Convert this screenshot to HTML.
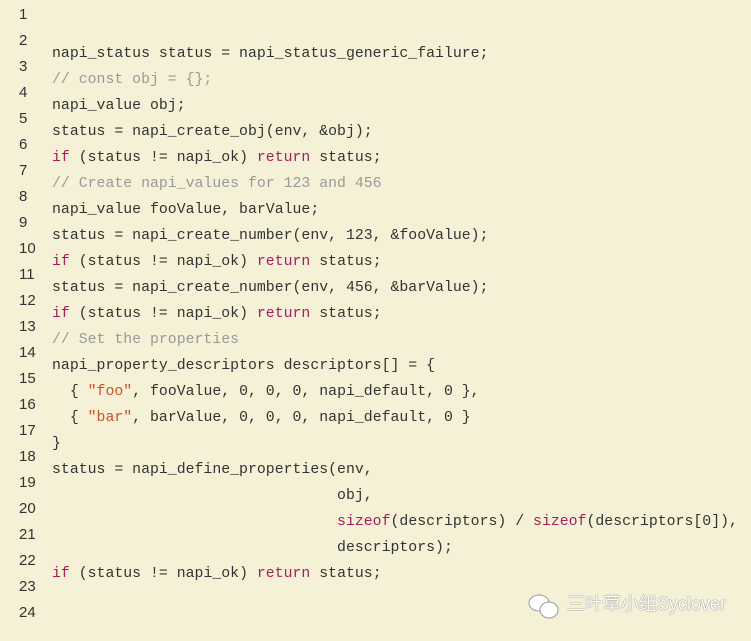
<!DOCTYPE html>
<html><head><meta charset="utf-8"><style>
html,body{margin:0;padding:0;}
body{width:751px;height:641px;background:#f4f1d6;position:relative;overflow:hidden;font-family:"Liberation Mono",monospace;font-size:14.85px;color:#333;}
.n{position:absolute;left:19px;font-family:"Liberation Sans",sans-serif;font-size:15px;color:#333;line-height:20px;}
.c{position:absolute;left:52px;white-space:pre;line-height:20px;}
.k{color:#a71d5d;}
.m{color:#999;}
.s{color:#d0502a;}
.wm{position:absolute;left:567px;top:594px;font-family:"Liberation Sans","Noto Sans CJK SC",sans-serif;font-size:18px;color:#fff;text-shadow:0 0 1px #777,0 0 1px #777;line-height:20px;}
</style></head><body>
<div class="n" style="top:5px">1</div>
<div class="n" style="top:31px">2</div>
<div class="n" style="top:57px">3</div>
<div class="n" style="top:83px">4</div>
<div class="n" style="top:109px">5</div>
<div class="n" style="top:135px">6</div>
<div class="n" style="top:161px">7</div>
<div class="n" style="top:187px">8</div>
<div class="n" style="top:213px">9</div>
<div class="n" style="top:239px">10</div>
<div class="n" style="top:265px">11</div>
<div class="n" style="top:291px">12</div>
<div class="n" style="top:317px">13</div>
<div class="n" style="top:343px">14</div>
<div class="n" style="top:369px">15</div>
<div class="n" style="top:395px">16</div>
<div class="n" style="top:421px">17</div>
<div class="n" style="top:447px">18</div>
<div class="n" style="top:473px">19</div>
<div class="n" style="top:499px">20</div>
<div class="n" style="top:525px">21</div>
<div class="n" style="top:551px">22</div>
<div class="n" style="top:577px">23</div>
<div class="n" style="top:603px">24</div>

<div class="c" style="top:44px">napi_status status = napi_status_generic_failure;</div>
<div class="c m" style="top:70px">// const obj = {};</div>
<div class="c" style="top:96px">napi_value obj;</div>
<div class="c" style="top:122px">status = napi_create_obj(env, &amp;obj);</div>
<div class="c" style="top:148px"><span class="k">if</span> (status != napi_ok) <span class="k">return</span> status;</div>
<div class="c m" style="top:174px">// Create napi_values for 123 and 456</div>
<div class="c" style="top:200px">napi_value fooValue, barValue;</div>
<div class="c" style="top:226px">status = napi_create_number(env, 123, &amp;fooValue);</div>
<div class="c" style="top:252px"><span class="k">if</span> (status != napi_ok) <span class="k">return</span> status;</div>
<div class="c" style="top:278px">status = napi_create_number(env, 456, &amp;barValue);</div>
<div class="c" style="top:304px"><span class="k">if</span> (status != napi_ok) <span class="k">return</span> status;</div>
<div class="c m" style="top:330px">// Set the properties</div>
<div class="c" style="top:356px">napi_property_descriptors descriptors[] = {</div>
<div class="c" style="top:382px">  { <span class="s">"foo"</span>, fooValue, 0, 0, 0, napi_default, 0 },</div>
<div class="c" style="top:408px">  { <span class="s">"bar"</span>, barValue, 0, 0, 0, napi_default, 0 }</div>
<div class="c" style="top:434px">}</div>
<div class="c" style="top:460px">status = napi_define_properties(env,</div>
<div class="c" style="top:486px">                                obj,</div>
<div class="c" style="top:512px">                                <span class="k">sizeof</span>(descriptors) / <span class="k">sizeof</span>(descriptors[0]),</div>
<div class="c" style="top:538px">                                descriptors);</div>
<div class="c" style="top:564px"><span class="k">if</span> (status != napi_ok) <span class="k">return</span> status;</div>

<svg style="position:absolute;left:527px;top:593px" width="36" height="28" viewBox="0 0 36 28">
<ellipse cx="12" cy="10" rx="10" ry="8" fill="#fff" stroke="#999" stroke-width="1"/>
<ellipse cx="22" cy="17" rx="9" ry="8" fill="#fff" stroke="#999" stroke-width="1"/>
</svg>
<div class="wm">三叶草小组Syclover</div>
</body></html>
